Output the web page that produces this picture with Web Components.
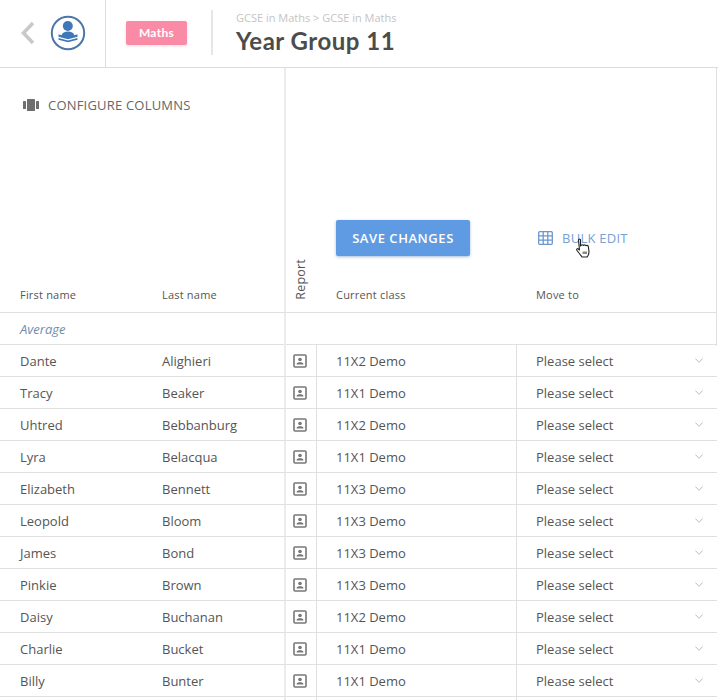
<!DOCTYPE html>
<html>
<head>
<meta charset="utf-8">
<title>Year Group 11</title>
<style>
  html, body { margin: 0; height: 700px; overflow: hidden; background: #fff; }
  body { font-family: "Open Sans", sans-serif; color: #555; }
</style>
</head>
<body>
<x-top-bar crumb="GCSE in Maths &gt; GCSE in Maths" heading="Year Group 11" subject="Maths"></x-top-bar>
<x-class-table></x-class-table>

<script>
class TopBar extends HTMLElement {
  connectedCallback() {
    this.shadow = this.attachShadow({ mode: "open" });
    this.shadow.innerHTML = `
      <style>
        :host {
          display: flex;
          box-sizing: border-box;
          height: 68px;
          border-bottom: 1px solid #dcdcdc;
        }
        .nav {
          box-sizing: border-box;
          width: 106px;
          border-right: 1px solid #dcdcdc;
          display: flex;
          align-items: center;
          padding: 0 0 1px 20px;
          gap: 15px;
        }
        .badge-wrap {
          display: flex;
          align-items: center;
          padding: 0 0 1px 20px;
        }
        .badge {
          width: 61px;
          height: 24px;
          border-radius: 2px;
          background: #f98ba6;
          color: #fff;
          font: 700 12px/24px Lato, sans-serif;
          letter-spacing: .3px;
          text-align: center;
          box-shadow: 0 1px 3px rgba(249, 139, 166, .35);
        }
        .divider {
          width: 2px;
          height: 45px;
          margin: 10px 23px 0 24px;
          background: #e6e6e6;
        }
        .crumb {
          margin-top: 10px;
          font: 400 11px/15px "Open Sans", sans-serif;
          color: #c4c4c4;
        }
        h1 {
          margin: 1px 0 0;
          font: 700 24px/30px Lato, sans-serif;
          letter-spacing: .5px;
          color: #4c4c4c;
        }
      </style>
      <div class="nav">
        <svg width="15" height="24" viewBox="0 0 15 24"><path d="M13 2 3.500 12 13 22" fill="none" stroke="#c9c9c9" stroke-width="3.600"/></svg>
        <svg width="36" height="36" viewBox="0 0 36 36">
          <circle cx="18" cy="18" r="16.200" fill="#fff" stroke="#4a76a8" stroke-width="2"/>
          <circle cx="17.800" cy="11" r="5" fill="#3f78b8"/>
          <path d="M8.500 19.500c1.500.2 2.500.4 3.200.7.500-2.400 3-3.700 6.300-3.700s5.800 1.300 6.300 3.700c.7-.3 1.700-.5 3.200-.7v2.200L18 24.200 8.500 21.700z" fill="#3f78b8"/>
          <path d="M8.500 23 18 25.500 27.500 23v1.700L18 27.200 8.500 24.700z" fill="#3f78b8"/>
        </svg>
      </div>
      <div class="badge-wrap"><div class="badge"></div></div>
      <div class="divider"></div>
      <div>
        <div class="crumb"></div>
        <h1></h1>
      </div>
    `;
    this.shadow.querySelector('.badge').textContent = this.getAttribute('subject');
    this.shadow.querySelector('.crumb').textContent = this.getAttribute('crumb');
    this.shadow.querySelector('h1').textContent = this.getAttribute('heading');
  }
}

class ReportIcon extends HTMLElement {
  connectedCallback() {
    this.shadow = this.attachShadow({ mode: "open" });
    this.shadow.innerHTML = `
      <style>
        :host { display: inline-flex; }
      </style>
      <svg width="14" height="14" viewBox="0 0 14 14">
        <rect x="1" y="1" width="12" height="12" rx="1" fill="none" stroke="#777" stroke-width="1.600"/>
        <circle cx="7" cy="5.500" r="1.800" fill="#777"/>
        <path d="M3.500 10.500c0-1.700 1.500-2.300 3.500-2.300s3.500.6 3.500 2.300z" fill="#777"/>
      </svg>
    `;
  }
}

class StudentRow extends HTMLElement {
  connectedCallback() {
    this.shadow = this.attachShadow({ mode: "open" });
    const filled = this.hasAttribute('first');
    this.shadow.innerHTML = `
      <style>
        :host {
          display: grid;
          grid-template-columns: 162px 122px 33px 199px 200px;
          box-sizing: border-box;
          height: 32px;
          width: 717px;
          border-bottom: 1px solid #e0e0e0;
          font-size: 13px;
          line-height: 32px;
          color: #555;
        }
        div { box-sizing: border-box; height: 31px; white-space: nowrap; }
        .first { padding-left: 20px; }
        .report {
          border-left: 2px solid #ececec;
          border-right: 1px solid #e0e0e0;
          display: flex;
          align-items: center;
          justify-content: center;
          padding-right: 2px;
        }
        .cls { padding-left: 19px; }
        .move {
          display: flex;
          justify-content: space-between;
          align-items: center;
          padding: 0 13px 0 19px;
          border-left: 1px solid #e0e0e0;
        }
      </style>
      <div class="first">${this.getAttribute('first') || ''}</div>
      <div class="last">${this.getAttribute('last') || ''}</div>
      <div class="report">${filled ? '<x-report-icon></x-report-icon>' : ''}</div>
      <div class="cls">${this.getAttribute('cls') || ''}</div>
      <div class="move">
        ${filled ? `<span>Please select</span>
        <svg width="8" height="5" viewBox="0 0 8 5"><path d="M.4.5 4 4.300 7.600.5" fill="none" stroke="#bdbdbd" stroke-width="1"/></svg>` : ''}
      </div>
    `;
  }
}

class TableHead extends HTMLElement {
  connectedCallback() {
    this.shadow = this.attachShadow({ mode: "open" });
    this.shadow.innerHTML = `
      <style>
        :host {
          display: grid;
          grid-template-columns: 284px 32px 1fr;
          box-sizing: border-box;
          width: 717px;
          height: 245px;
          border-bottom: 1px solid #e0e0e0;
          font-size: 11px;
          letter-spacing: .2px;
        }
        .left {
          display: flex;
          flex-direction: column;
          justify-content: space-between;
          padding: 28px 0 10px 23px;
        }
        .configure {
          display: flex;
          align-items: center;
          gap: 9px;
          font-size: 13px;
          line-height: 18px;
          letter-spacing: .2px;
          color: #666;
        }
        .names {
          display: grid;
          grid-template-columns: 142px 142px;
          margin-left: -3px;
          line-height: 15px;
          color: #555;
        }
        .report {
          border-left: 2px solid #ececec;
          box-sizing: border-box;
          display: flex;
          justify-content: center;
          align-items: flex-end;
          padding: 0 0 12px;
        }
        .report span {
          writing-mode: vertical-rl;
          transform: rotate(180deg);
          font-size: 12.500px;
          line-height: 16px;
          color: #555;
        }
        .right {
          display: flex;
          flex-direction: column;
          justify-content: flex-end;
          padding: 0 0 10px 20px;
          border-right: 1px solid #e0e0e0;
        }
        .actions {
          display: grid;
          grid-template-columns: 200px 1fr;
          align-items: center;
          margin-bottom: 31px;
        }
        button {
          display: block;
          width: 134px;
          height: 36px;
          border: 0;
          padding: 0;
          border-radius: 2px;
          background: #5e9be3;
          color: #fff;
          font: 600 13px "Open Sans", sans-serif;
          letter-spacing: .55px;
          box-shadow: 0 1px 3px rgba(60, 110, 170, .45);
        }
        .bulk {
          position: relative;
          display: flex;
          align-items: center;
          gap: 9px;
          padding-left: 2px;
          font-size: 13px;
          letter-spacing: .25px;
          color: #79a0d2;
        }
        .cursor { position: absolute; left: 39px; top: 9px; }
        .cols {
          display: grid;
          grid-template-columns: 200px 1fr;
          line-height: 15px;
          color: #555;
        }
      </style>
      <div class="left">
        <div class="configure">
          <svg width="16" height="12" viewBox="0 0 16 12" fill="#6f6f6f">
            <rect x="0" y="2" width="3" height="8" rx=".6"/>
            <rect x="4" y="0" width="8" height="12" rx=".6"/>
            <rect x="13" y="2" width="3" height="8" rx=".6"/>
          </svg>
          <span>CONFIGURE COLUMNS</span>
        </div>
        <div class="names"><span>First name</span><span>Last name</span></div>
      </div>
      <div class="report"><span>Report</span></div>
      <div class="right">
        <div class="actions">
          <div><button>SAVE CHANGES</button></div>
          <div class="bulk">
            <svg width="15" height="14" viewBox="0 0 15 14" fill="none" stroke="#6d97cc" stroke-width="1.300">
              <rect x=".7" y=".7" width="13.600" height="12.600" rx="1"/>
              <path d="M.7 4.900h13.600M.7 9.100h13.600M5.200.7v12.600M9.800.7v12.600"/>
            </svg>
            <span>BULK EDIT</span>
            <svg class="cursor" width="17" height="20" viewBox="0 0 17 20">
              <path d="M3.500 2c0-1.300 2-1.300 2 0v6l.5-.5c.5-1 2-1 2.500 0 .5-.8 2-.8 2.500.2.600-.6 2-.4 2.300.6l.7 5.200c0 2.500-1 4.500-2 5.500H7c-1-1.500-3-4-5-6.500-1-1.300.6-2.500 1.500-1.500l1 1z" fill="#fff" stroke="#222" stroke-width="1.100" stroke-linejoin="round"/>
              <path d="M7.500 13.500h4.500v2.500H7.500z" fill="#8a8a8a"/>
            </svg>
          </div>
        </div>
        <div class="cols"><span>Current class</span><span>Move to</span></div>
      </div>
    `;
  }
}

class AverageRow extends HTMLElement {
  connectedCallback() {
    this.shadow = this.attachShadow({ mode: "open" });
    this.shadow.innerHTML = `
      <style>
        :host {
          display: grid;
          grid-template-columns: 284px 1fr;
          box-sizing: border-box;
          width: 717px;
          height: 32px;
          border-bottom: 1px solid #e0e0e0;
          font-size: 13px;
          font-style: italic;
          line-height: 33px;
          color: #6f8dae;
        }
        .label { padding-left: 20px; }
        .rest {
          border-left: 2px solid #ececec;
          border-right: 1px solid #e0e0e0;
        }
      </style>
      <div class="label">Average</div>
      <div class="rest"></div>
    `;
  }
}

class ClassTable extends HTMLElement {
  connectedCallback() {
    this.shadow = this.attachShadow({ mode: "open" });
    const students = [
      ['Dante', 'Alighieri', '11X2 Demo'],
      ['Tracy', 'Beaker', '11X1 Demo'],
      ['Uhtred', 'Bebbanburg', '11X2 Demo'],
      ['Lyra', 'Belacqua', '11X1 Demo'],
      ['Elizabeth', 'Bennett', '11X3 Demo'],
      ['Leopold', 'Bloom', '11X3 Demo'],
      ['James', 'Bond', '11X3 Demo'],
      ['Pinkie', 'Brown', '11X3 Demo'],
      ['Daisy', 'Buchanan', '11X2 Demo'],
      ['Charlie', 'Bucket', '11X1 Demo'],
      ['Billy', 'Bunter', '11X1 Demo']
    ];
    this.shadow.innerHTML = `
      <style>
        :host { display: block; }
      </style>
      <x-table-head></x-table-head>
      <x-average-row></x-average-row>
    `;
    students.forEach(([first, last, cls]) => {
      const row = document.createElement('x-student-row');
      row.setAttribute('first', first);
      row.setAttribute('last', last);
      row.setAttribute('cls', cls);
      this.shadow.appendChild(row);
    });
    // the next row is only just in view, below the fold
    this.shadow.appendChild(document.createElement('x-student-row'));
  }
}

customElements.define('x-report-icon', ReportIcon);
customElements.define('x-student-row', StudentRow);
customElements.define('x-table-head', TableHead);
customElements.define('x-average-row', AverageRow);
customElements.define('x-class-table', ClassTable);
customElements.define('x-top-bar', TopBar);
</script>
</body>
</html>
